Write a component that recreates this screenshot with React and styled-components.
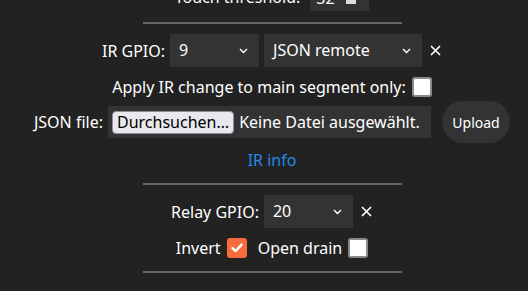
import styled, { createGlobalStyle } from "styled-components";

const Global = createGlobalStyle`
    html, body {
        margin: 0;
        padding: 0;
        background: #222;
        color: #fff;
        font-family: "Noto Sans", "Open Sans", sans-serif;
        font-size: 16px;
    }
`;

function Check({ checked }) {
    return (
        <CheckBox checked={checked}>
            {checked && (
                <svg width="14" height="14" viewBox="0 0 14 14">
                    <path d="M2.5 7.2 L5.6 10.2 L11.5 3.6" fill="none" stroke="#fff" strokeWidth="2.4" strokeLinecap="round" strokeLinejoin="round" />
                </svg>
            )}
        </CheckBox>
    );
}

function Chevron() {
    return (
        <svg width="9" height="6" viewBox="0 0 9 6">
            <path d="M1 1 L4.5 4.5 L8 1" fill="none" stroke="#fff" strokeWidth="1.4" />
        </svg>
    );
}

function Select({ value, width }) {
    return (
        <SelectBox $w={width}>
            <span>{value}</span>
            <Chevron />
        </SelectBox>
    );
}

function Close() {
    return (
        <CloseIcon width="11" height="11" viewBox="0 0 11 11">
            <path d="M1 1 L10 10 M10 1 L1 10" stroke="#fff" strokeWidth="1.7" />
        </CloseIcon>
    );
}

export default function App() {
    return (
        <Page>
            <Global />
            <TopRow>
                <TopLabel>Touch threshold:</TopLabel>
                <NumberBox>
                    32
                    <Spin />
                </NumberBox>
            </TopRow>
            <Rule />

            <Row $mt={10}>
                <Label>IR GPIO:</Label>
                <Select value="9" width={89} />
                <Select value="JSON remote" width={158} />
                <Close />
            </Row>
            <Row $mt={10} $gap={6}>
                <Label>Apply IR change to main segment only:</Label>
                <Check checked={false} />
            </Row>
            <Row $mt={4} $gap={5}>
                <Label>JSON file:</Label>
                <FileField>
                    <FileButton>Durchsuchen…</FileButton>
                    Keine Datei ausgewählt.
                </FileField>
                <Upload>Upload</Upload>
            </Row>
            <Link href="#">IR info</Link>
            <Rule $mt={13} />

            <Row $mt={10}>
                <Label>Relay GPIO:</Label>
                <Select value="20" width={89} />
                <Close />
            </Row>
            <Row $mt={10} $gap={6}>
                <Label>Invert</Label>
                <Check checked />
                <Label style={{ marginLeft: 5 }}>Open drain</Label>
                <Check checked={false} />
            </Row>
            <Rule $mt={13} />
        </Page>
    );
}

const Page = styled.div`
    width: 512px;
    padding-left: 16px;
    display: flex;
    flex-direction: column;
    align-items: center;
    text-align: center;
`;

const TopRow = styled.div`
    height: 12px;
    overflow: hidden;
    display: flex;
    align-items: flex-end;
    justify-content: center;
    gap: 10px;
`;

const Label = styled.span`
    white-space: nowrap;
    line-height: 20px;
`;

const TopLabel = styled(Label)`
    margin-bottom: 5px;
`;

const NumberBox = styled.div`
    position: relative;
    width: 59px;
    height: 32px;
    margin-bottom: 1px;
    background: #333;
    box-sizing: border-box;
    padding-left: 6px;
    line-height: 38px;
    text-align: left;
`;

const Spin = styled.span`
    position: absolute;
    right: 13px;
    bottom: 7px;
    width: 10px;
    height: 12px;
    background: #ddd;
`;

const Rule = styled.div`
    width: 259px;
    height: 2px;
    margin-top: ${p => p.$mt ?? 10}px;
    background: #666;
`;

const Row = styled.div`
    display: flex;
    align-items: center;
    justify-content: center;
    gap: ${p => p.$gap ?? 5}px;
    margin-top: ${p => p.$mt}px;
`;

const SelectBox = styled.div`
    width: ${p => p.$w}px;
    height: 33px;
    box-sizing: border-box;
    background: #333;
    display: flex;
    align-items: center;
    justify-content: space-between;
    padding: 0 11px 0 9px;
    line-height: 33px;

    svg { margin-top: 1px; }
`;

const CloseIcon = styled.svg`
    margin-left: 3px;
    margin-right: 1px;
`;

const CheckBox = styled.span`
    width: 20px;
    height: 20px;
    box-sizing: border-box;
    border-radius: 3px;
    display: inline-flex;
    align-items: center;
    justify-content: center;
    background: ${p => (p.checked ? "#f86b3b" : "#fff")};
    border: ${p => (p.checked ? "none" : "2px solid #8a8a8a")};
`;

const FileField = styled.div`
    width: 323px;
    height: 32px;
    box-sizing: border-box;
    background: #333;
    display: flex;
    align-items: center;
    gap: 5px;
    padding-left: 4px;
    white-space: nowrap;
`;

const FileButton = styled.span`
    height: 23px;
    box-sizing: border-box;
    padding: 0 4px;
    background: #e9e9ed;
    color: #000;
    border: 1px solid #8f8f9d;
    border-radius: 4px;
    line-height: 21px;
`;

const Upload = styled.button`
    width: 68px;
    height: 42px;
    margin-left: 6px;
    border: none;
    border-radius: 21px;
    background: #333;
    color: #fff;
    font-family: inherit;
    font-size: 14px;
    padding: 0;
`;

const Link = styled.a`
    margin-top: 7px;
    line-height: 20px;
    color: #2089e6;
    text-decoration: none;
`;
